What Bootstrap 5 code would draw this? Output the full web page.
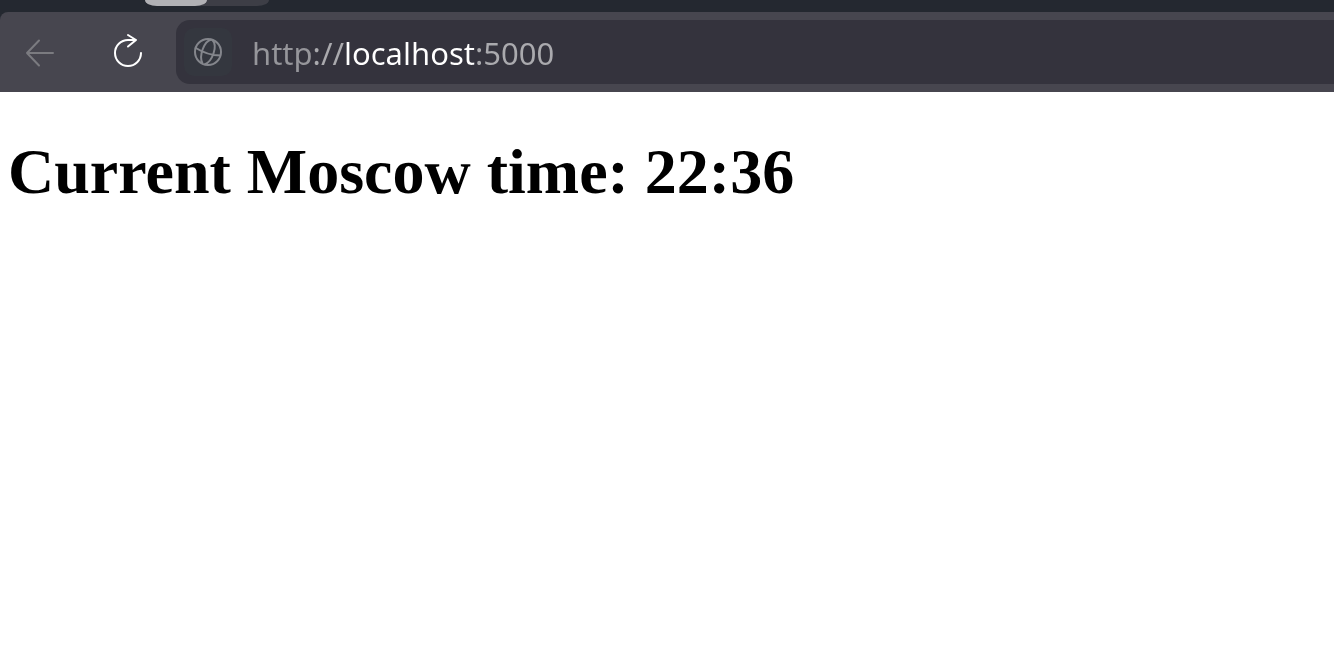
<!DOCTYPE html>
<html lang="en">
<head>
<meta charset="utf-8">
<meta name="viewport" content="width=device-width, initial-scale=1">
<title>Moscow time</title>
<link href="https://cdn.jsdelivr.net/npm/bootstrap@5.3.0/dist/css/bootstrap.min.css" rel="stylesheet">
<style>
  body { background: #fff; color: #000; }
  .tab-strip { height: 12px; padding-left: 145px; background: #242830; }
  .tab-group { width: 124px; height: 6px; background: #3d3e46; border-radius: 0 0 12px 12px / 0 0 6px 6px; }
  .tab-active { width: 62px; height: 6px; background: #b1b1b5; border-radius: 0 0 12px 12px / 0 0 6px 6px; }
  .strip-wrap { background: #242830; }
  .toolbar { height: 80px; background: #47464f; border-top-left-radius: 8px; }
  .tool-btn { width: 88px; height: 80px; padding: 0; border: 0; border-radius: 0; }
  .tool-btn svg { display: block; }
  .address { height: 64px; padding-left: 8px; background: #34333d; border-radius: 14px 0 0 14px; }
  .site-btn { width: 48px; height: 48px; padding: 0; border: 0; background: #34373f; border-radius: 10px; }
  .url-field, .url-field:focus {
    height: 64px; padding: 1px 0 0 20px; border: 0; border-radius: 0; outline: 0; box-shadow: none;
    font-family: "Noto Sans", sans-serif; font-size: 31px; line-height: 40px; color: #fff;
    /* the host is bright, the scheme and the port are dim */
    background: linear-gradient(90deg, #96969b 80px, #aaaaae 80px, #aaaaae 112px, #fff 112px, #fff 243px, #aaaaae 243px);
    -webkit-background-clip: text; background-clip: text;
    -webkit-text-fill-color: transparent;
  }
  .page-title { font-family: "Liberation Serif", serif; font-size: 64px; line-height: 64px; }
</style>
</head>
<body>
<header class="strip-wrap">
  <div class="tab-strip"><div class="tab-group"><div class="tab-active"></div></div></div>
  <nav class="toolbar d-flex align-items-center" aria-label="Browser">
    <button type="button" class="tool-btn btn flex-shrink-0" aria-label="Back">
      <svg width="88" height="80" fill="none" stroke="#7b7b80" stroke-width="2" stroke-linecap="round" stroke-linejoin="round"><path d="M53 41H27M39 28.500L27 41L39 53.500"/></svg>
    </button>
    <button type="button" class="tool-btn btn flex-shrink-0" aria-label="Reload">
      <svg width="88" height="80" fill="none" stroke="#fff" stroke-width="2" stroke-linecap="round" stroke-linejoin="round"><path d="M53 41A13 13 0 1 1 40 28H48M40 23L48 28L40 34.500"/></svg>
    </button>
    <div class="address d-flex align-items-center flex-grow-1">
      <button type="button" class="site-btn btn flex-shrink-0" aria-label="Site information">
        <svg class="d-block" width="48" height="48" fill="none" stroke="#84868c" stroke-width="2"><circle cx="24" cy="24" r="13"/><path d="M27.500 11.500C20 13 14.500 28 18.500 35.500M28 11.500C34.500 18 28 34 20.500 36.500M11 19.500C18 24 27 27.500 36.500 27.500"/></svg>
      </button>
      <input type="text" class="url-field form-control" aria-label="Address" value="http://localhost:5000" spellcheck="false">
    </div>
  </nav>
</header>
<main class="px-2 pt-5">
  <h1 class="page-title fw-bold m-0">Current Moscow time: 22:36</h1>
</main>
<script src="https://cdn.jsdelivr.net/npm/bootstrap@5.3.0/dist/js/bootstrap.bundle.min.js"></script>
</body>
</html>
